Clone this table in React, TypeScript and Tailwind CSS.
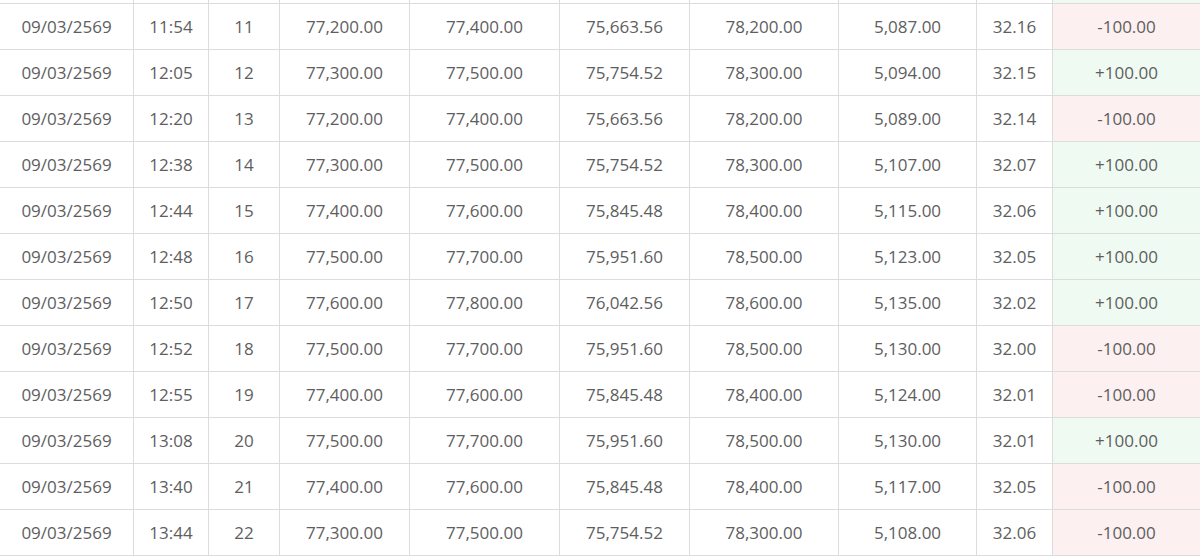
import React from "react";

type Row = {
  date: string;
  time: string;
  no: number;
  buy: string;
  sell: string;
  bar: string;
  ornament: string;
  tax: string;
  rate: string;
  change: number;
};

const rows: Row[] = [
  { date: "09/03/2569", time: "11:54", no: 11, buy: "77,200.00", sell: "77,400.00", bar: "75,663.56", ornament: "78,200.00", tax: "5,087.00", rate: "32.16", change: -100 },
  { date: "09/03/2569", time: "12:05", no: 12, buy: "77,300.00", sell: "77,500.00", bar: "75,754.52", ornament: "78,300.00", tax: "5,094.00", rate: "32.15", change: 100 },
  { date: "09/03/2569", time: "12:20", no: 13, buy: "77,200.00", sell: "77,400.00", bar: "75,663.56", ornament: "78,200.00", tax: "5,089.00", rate: "32.14", change: -100 },
  { date: "09/03/2569", time: "12:38", no: 14, buy: "77,300.00", sell: "77,500.00", bar: "75,754.52", ornament: "78,300.00", tax: "5,107.00", rate: "32.07", change: 100 },
  { date: "09/03/2569", time: "12:44", no: 15, buy: "77,400.00", sell: "77,600.00", bar: "75,845.48", ornament: "78,400.00", tax: "5,115.00", rate: "32.06", change: 100 },
  { date: "09/03/2569", time: "12:48", no: 16, buy: "77,500.00", sell: "77,700.00", bar: "75,951.60", ornament: "78,500.00", tax: "5,123.00", rate: "32.05", change: 100 },
  { date: "09/03/2569", time: "12:50", no: 17, buy: "77,600.00", sell: "77,800.00", bar: "76,042.56", ornament: "78,600.00", tax: "5,135.00", rate: "32.02", change: 100 },
  { date: "09/03/2569", time: "12:52", no: 18, buy: "77,500.00", sell: "77,700.00", bar: "75,951.60", ornament: "78,500.00", tax: "5,130.00", rate: "32.00", change: -100 },
  { date: "09/03/2569", time: "12:55", no: 19, buy: "77,400.00", sell: "77,600.00", bar: "75,845.48", ornament: "78,400.00", tax: "5,124.00", rate: "32.01", change: -100 },
  { date: "09/03/2569", time: "13:08", no: 20, buy: "77,500.00", sell: "77,700.00", bar: "75,951.60", ornament: "78,500.00", tax: "5,130.00", rate: "32.01", change: 100 },
  { date: "09/03/2569", time: "13:40", no: 21, buy: "77,400.00", sell: "77,600.00", bar: "75,845.48", ornament: "78,400.00", tax: "5,117.00", rate: "32.05", change: -100 },
  { date: "09/03/2569", time: "13:44", no: 22, buy: "77,300.00", sell: "77,500.00", bar: "75,754.52", ornament: "78,300.00", tax: "5,108.00", rate: "32.06", change: -100 },
];

const cols = "grid grid-cols-[134px_75px_71px_130px_150px_130px_149px_138px_76px_1fr]";
const cell = "flex items-center justify-center border-r border-[#dcdcdc]";

export default function App() {
  return (
    <div className="w-[1200px] h-[556px] overflow-hidden bg-white text-[17px] text-[#5e5e5e] font-['Open_Sans',sans-serif]">
      {/* tail of the row above, cut off by the viewport */}
      <div className={`${cols} h-[4px] border-b border-[#dcdcdc]`}>
        <div className={cell} />
        <div className={cell} />
        <div className={cell} />
        <div className={cell} />
        <div className={cell} />
        <div className={cell} />
        <div className={cell} />
        <div className={cell} />
        <div className={cell} />
        <div className="bg-[#effbf2]" />
      </div>

      {rows.map((r) => (
        <div key={r.no} className={`${cols} h-[46px] border-b border-[#dcdcdc]`}>
          <div className={cell}>{r.date}</div>
          <div className={cell}>{r.time}</div>
          <div className={cell}>{r.no}</div>
          <div className={cell}>{r.buy}</div>
          <div className={cell}>{r.sell}</div>
          <div className={cell}>{r.bar}</div>
          <div className={cell}>{r.ornament}</div>
          <div className={cell}>{r.tax}</div>
          <div className={cell}>{r.rate}</div>
          <div
            className={`flex items-center justify-center ${
              r.change > 0 ? "bg-[#effbf2]" : "bg-[#fdf0f0]"
            }`}
          >
            {r.change > 0 ? "+100.00" : "-100.00"}
          </div>
        </div>
      ))}
    </div>
  );
}
